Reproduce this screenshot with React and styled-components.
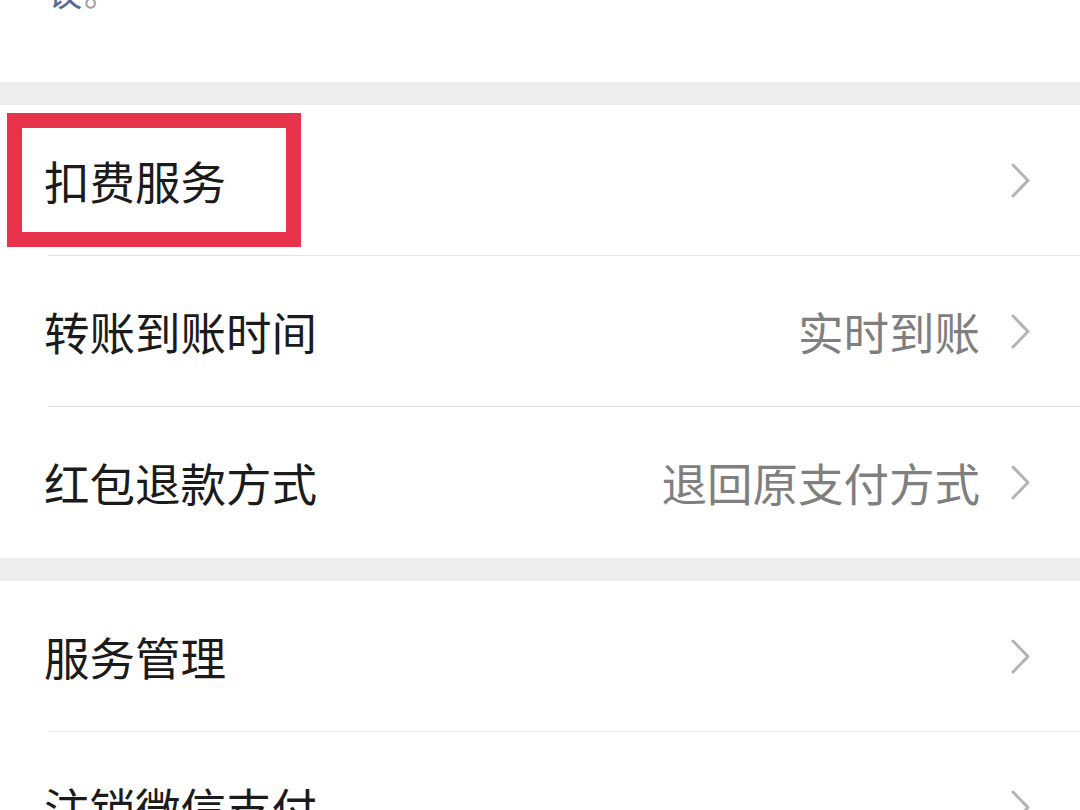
import React from 'react'
import styled, { createGlobalStyle } from 'styled-components'

const Global = createGlobalStyle`
  html, body {
    margin: 0;
    padding: 0;
    background: #ffffff;
  }
  body {
    font-family: "Noto Sans CJK SC", "Noto Sans", sans-serif;
  }
`

const Page = styled.div`
  width: 1080px;
  height: 810px;
  overflow: hidden;
  background: #ffffff;
`

const Notice = styled.div`
  height: 82px;
  padding-left: 48px;
  overflow: hidden;
  p {
    margin: -28px 0 0;
    font-size: 34px;
    line-height: 40px;
    color: #9a9a9a;
  }
  a {
    color: #576b95;
    text-decoration: none;
    margin-right: 2px;
  }
`

const Band = styled.div`
  height: 23px;
  background: #ededed;
`

const Group = styled.div`
  background: #ffffff;
`

const Row = styled.div`
  position: relative;
  padding-left: 48px;
`

const RowBody = styled.div`
  height: 150px;
  display: flex;
  align-items: center;
  padding-right: 49px;
  border-bottom: 1px solid ${p => (p.$last ? 'transparent' : '#e6e6e6')};
`

const Label = styled.span`
  flex: 1;
  margin-left: -4px;
  font-size: 45.5px;
  color: #1b1b1b;
`

const Value = styled.span`
  font-size: 45.5px;
  color: #7f7f7f;
  margin-right: 31px;
`

const Chevron = styled.svg`
  width: 20px;
  height: 35px;
  flex: none;
`

const Highlight = styled.div`
  position: absolute;
  left: 7px;
  top: 8px;
  width: 294px;
  height: 134px;
  box-sizing: border-box;
  border: 15px solid #e8344a;
  pointer-events: none;
`

const Arrow = () => (
  <Chevron viewBox="0 0 20 35">
    <polyline points="2,2 17,17.5 2,33" fill="none" stroke="#b3b3b3" strokeWidth="3" strokeLinecap="round" strokeLinejoin="round" />
  </Chevron>
)

const Item = ({ label, value, last, marked }) => (
  <Row>
    <RowBody $last={last}>
      <Label>{label}</Label>
      {value && <Value>{value}</Value>}
      <Arrow />
    </RowBody>
    {marked && <Highlight />}
  </Row>
)

export default function App() {
  return (
    <Page>
      <Global />
      <Notice>
        <p><a>议</a>。</p>
      </Notice>
      <Band />
      <Group>
        <Item label="扣费服务" marked />
        <Item label="转账到账时间" value="实时到账" />
        <Item label="红包退款方式" value="退回原支付方式" last />
      </Group>
      <Band />
      <Group>
        <Item label="服务管理" />
        <Item label="注销微信支付" last />
      </Group>
    </Page>
  )
}
